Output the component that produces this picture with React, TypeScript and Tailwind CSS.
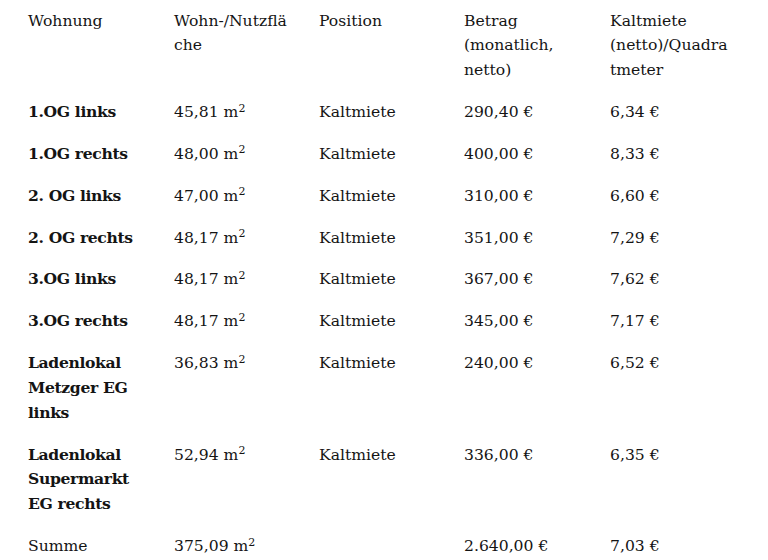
import React from 'react';

type Row = {
  name: string[];
  area: string;
  position: string;
  amount: string;
  perSqm: string;
  bold?: boolean;
};

const rows: Row[] = [
  { name: ['1.OG links'], area: '45,81', position: 'Kaltmiete', amount: '290,40 €', perSqm: '6,34 €', bold: true },
  { name: ['1.OG rechts'], area: '48,00', position: 'Kaltmiete', amount: '400,00 €', perSqm: '8,33 €', bold: true },
  { name: ['2. OG links'], area: '47,00', position: 'Kaltmiete', amount: '310,00 €', perSqm: '6,60 €', bold: true },
  { name: ['2. OG rechts'], area: '48,17', position: 'Kaltmiete', amount: '351,00 €', perSqm: '7,29 €', bold: true },
  { name: ['3.OG links'], area: '48,17', position: 'Kaltmiete', amount: '367,00 €', perSqm: '7,62 €', bold: true },
  { name: ['3.OG rechts'], area: '48,17', position: 'Kaltmiete', amount: '345,00 €', perSqm: '7,17 €', bold: true },
  { name: ['Ladenlokal', 'Metzger EG', 'links'], area: '36,83', position: 'Kaltmiete', amount: '240,00 €', perSqm: '6,52 €', bold: true },
  { name: ['Ladenlokal', 'Supermarkt', 'EG rechts'], area: '52,94', position: 'Kaltmiete', amount: '336,00 €', perSqm: '6,35 €', bold: true },
  { name: ['Summe'], area: '375,09', position: '', amount: '2.640,00 €', perSqm: '7,03 €' },
];

// explicit line breaks, as in the source document
function Lines({ lines }: { lines: string[] }) {
  return (
    <>
      {lines.map((l, i) => (
        <div key={i}>{l}</div>
      ))}
    </>
  );
}

const rowCls = 'grid grid-cols-[146px_145px_145px_146px_1fr] pt-[8.6px] pb-[8.4px]';

export default function App() {
  return (
    <div className="min-h-[560px] w-[768px] bg-white pl-[28px] text-[15.6px] leading-[24.85px] text-[#141414] font-['DejaVu_Serif',serif] whitespace-nowrap">
      {/* Header */}
      <div className={rowCls}>
        <div>Wohnung</div>
        <div><Lines lines={['Wohn-/Nutzflä', 'che']} /></div>
        <div>Position</div>
        <div><Lines lines={['Betrag', '(monatlich,', 'netto)']} /></div>
        <div><Lines lines={['Kaltmiete', '(netto)/Quadra', 'tmeter']} /></div>
      </div>

      {rows.map((r, i) => (
        <div key={i} className={rowCls}>
          <div className={r.bold ? 'font-bold tracking-[-0.35px]' : ''}>
            <Lines lines={r.name} />
          </div>
          <div>
            {r.area} m<sup className="text-[11px] -top-[0.5em]">2</sup>
          </div>
          <div>{r.position}</div>
          <div>{r.amount}</div>
          <div>{r.perSqm}</div>
        </div>
      ))}
    </div>
  );
}
